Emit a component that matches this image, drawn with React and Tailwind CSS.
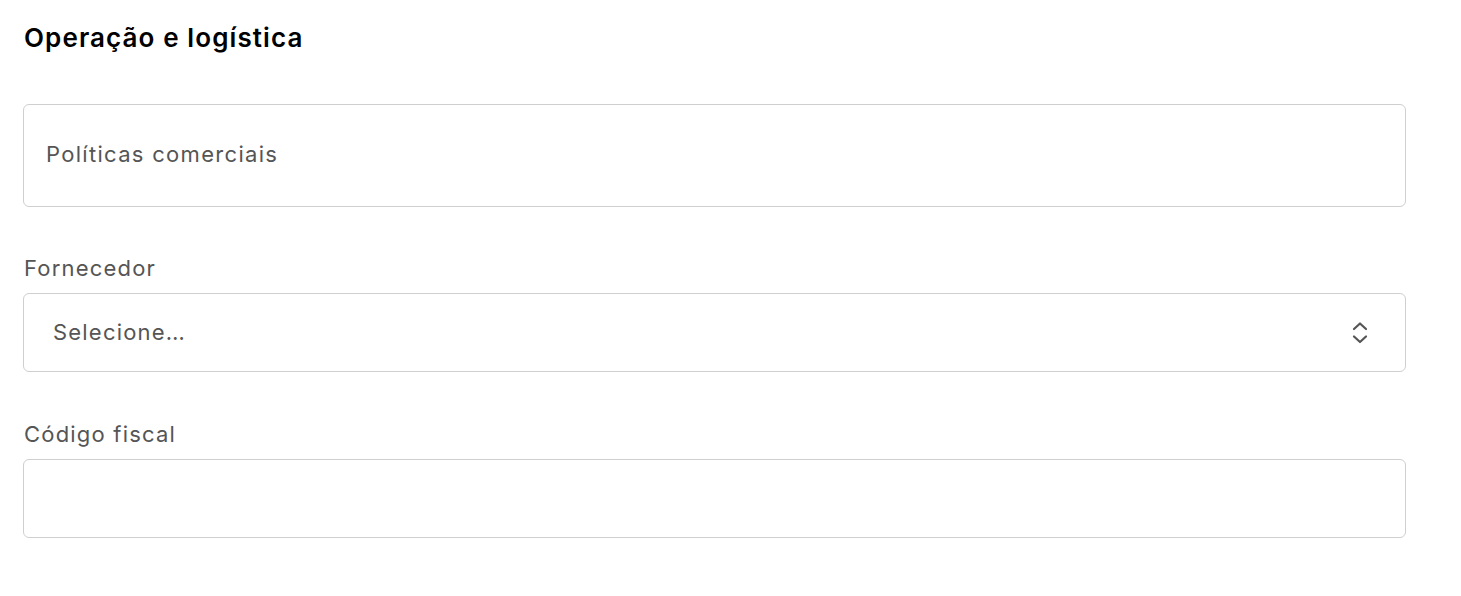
export default function App() {
  return (
    <div className="min-h-[596px] w-[1461px] bg-white font-['Inter',sans-serif]">
      <div className="w-[1406px] pl-[23px] pt-[22px]">
        <h2 className="pl-px text-[26px] font-semibold leading-[32px] tracking-[1.1px] text-black">
          Operação e logística
        </h2>

        <div className="mt-[50px] flex h-[103px] items-center rounded-[6px] border border-[#cfcfcf] px-[22px] pb-[3px]">
          <span className="text-[22px] tracking-[1.3px] text-[#555555]">Políticas comerciais</span>
        </div>

        <div className="mt-[47px]">
          <label className="block pl-px text-[22px] leading-[28px] tracking-[1.2px] text-[#555555]">Fornecedor</label>
          <div className="mt-[11px] flex h-[79px] items-center justify-between rounded-[6px] border border-[#cfcfcf] pl-[29px] pr-[37px]">
            <span className="text-[22px] tracking-[1.2px] text-[#555555]">Selecione…</span>
            <svg width="16" height="22" viewBox="0 0 16 22" fill="none" stroke="#555555" strokeWidth="2.2" strokeLinecap="round" strokeLinejoin="round">
              <polyline points="2,7 8,1.5 14,7" />
              <polyline points="2,14.5 8,20 14,14.5" />
            </svg>
          </div>
        </div>

        <div className="mt-[48px]">
          <label className="block pl-px text-[22px] leading-[28px] tracking-[1.2px] text-[#555555]">Código fiscal</label>
          <div className="mt-[11px] h-[79px] rounded-[6px] border border-[#cfcfcf]" />
        </div>
      </div>
    </div>
  )
}
